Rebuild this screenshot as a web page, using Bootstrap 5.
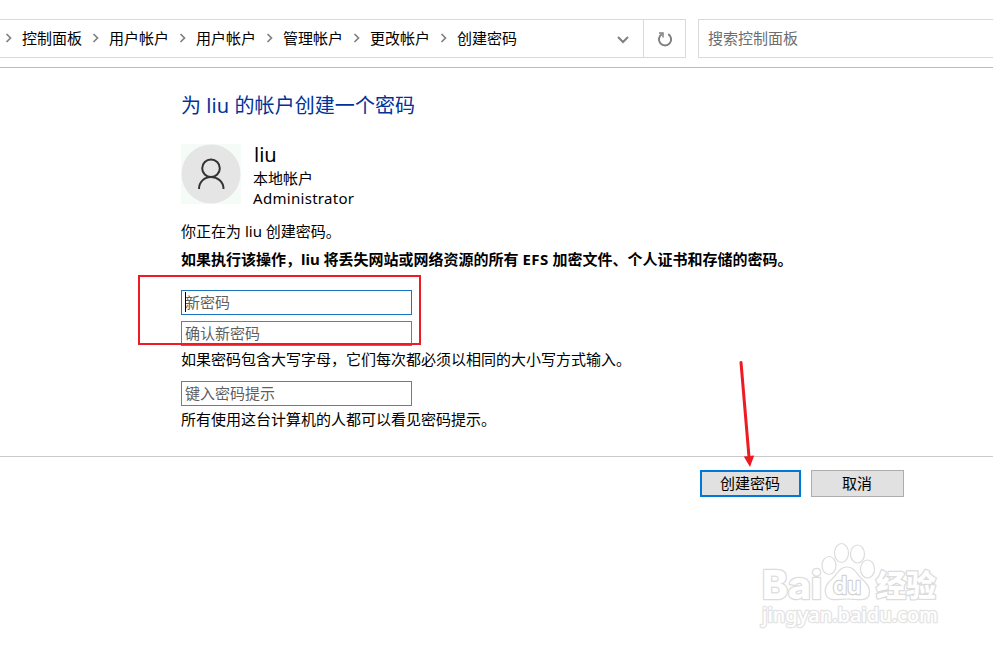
<!DOCTYPE html>
<html lang="zh-CN">
<head>
<meta charset="utf-8">
<title>创建密码</title>
<link href="https://cdn.jsdelivr.net/npm/bootstrap@5.3.0/dist/css/bootstrap.min.css" rel="stylesheet">
<style>
body{font-family:"Noto Sans","Noto Sans CJK SC",sans-serif;font-size:15px;line-height:20px;color:#000;background:#fff;height:650px;overflow:hidden}
.topbar{height:68px;padding-top:19px;border-bottom:1px solid #bdbdbd}
.address{width:686px;height:39px;border:1px solid #d9d9d9;border-left:0}
.crumb-sep{width:22px;height:20px;padding-left:5px}
.crumb-text{width:65px;line-height:18px}
.address svg,.avatar{display:block}
.drop{width:40px}
.refresh{width:42px;border-left:1px solid #d9d9d9}
.search{height:39px;margin-left:12px;border:1px solid #d9d9d9;border-right:0;padding:0 0 2px 9px;color:#6d6d6d}
.content-area{height:388px;padding:23px 0 0 181px}
.title-line{font-size:20px;line-height:30px;color:#003399;margin:0 0 23px;letter-spacing:.07px}
.who{height:60px;gap:12px}
.user-name{font-size:20px;line-height:26px;margin:-2px 0 0 1px}
.role{letter-spacing:.3px}
.note-a{margin-top:17px}
.note-b{margin-top:8px;font-weight:700;margin-bottom:21px}
.efs{letter-spacing:.4px}
.field{display:block;width:231px;height:25px;border:1px solid #7a7a7a;border-radius:0;padding:0 3px 2px;font:inherit;line-height:20px;color:#000;background:#fff}
.field::placeholder{color:#5f5f5f;opacity:1}
.field-active{border-color:#1a74bd}
.gap-fields{gap:6px}
.note-c{margin:3px 0 12px}
.note-d{margin-top:3px}
.actions{border-top:1px solid #cacaca;padding:13px 89px 0 0;gap:10px}
.btn-win{height:27px;width:93px;padding:0 1px 2px 0;border:1px solid #adadad;border-radius:0;background:#e1e1e1;color:#000;font-size:15px;line-height:20px}
.btn-main{width:101px;border:2px solid #0078d7}
.red-frame{left:138px;top:275px;width:283px;height:70px;border:2px solid #ed1c24}
.caret-line{left:185px;top:292px;width:1px;height:20px;background:#000}
.arrow-mark{left:730px;top:355px}
.watermark{left:750px;top:535px}
.watermark text{paint-order:stroke}
</style>
</head>
<body class="position-relative">
<header class="topbar d-flex">
  <div class="address d-flex align-items-center">
    <nav class="d-flex flex-grow-1">
      <div class="crumb-sep"><svg width="8" height="20"><path d="M1.500 5 5.500 9 1.500 13" fill="none" stroke="#808080" stroke-width="1.700"/></svg></div><div class="crumb-text">控制面板</div>
      <div class="crumb-sep"><svg width="8" height="20"><path d="M1.500 5 5.500 9 1.500 13" fill="none" stroke="#808080" stroke-width="1.700"/></svg></div><div class="crumb-text">用户帐户</div>
      <div class="crumb-sep"><svg width="8" height="20"><path d="M1.500 5 5.500 9 1.500 13" fill="none" stroke="#808080" stroke-width="1.700"/></svg></div><div class="crumb-text">用户帐户</div>
      <div class="crumb-sep"><svg width="8" height="20"><path d="M1.500 5 5.500 9 1.500 13" fill="none" stroke="#808080" stroke-width="1.700"/></svg></div><div class="crumb-text">管理帐户</div>
      <div class="crumb-sep"><svg width="8" height="20"><path d="M1.500 5 5.500 9 1.500 13" fill="none" stroke="#808080" stroke-width="1.700"/></svg></div><div class="crumb-text">更改帐户</div>
      <div class="crumb-sep"><svg width="8" height="20"><path d="M1.500 5 5.500 9 1.500 13" fill="none" stroke="#808080" stroke-width="1.700"/></svg></div><div class="crumb-text">创建密码</div>
    </nav>
    <div class="drop d-flex justify-content-center"><svg width="14" height="12"><path d="M2 4 7 9 12 4" fill="none" stroke="#808080" stroke-width="2"/></svg></div>
    <div class="refresh h-100 d-flex align-items-center justify-content-center"><svg width="18" height="18"><path d="M12.300 4.200A6.100 6.100 0 1 1 5.800 4.200" fill="none" stroke="#808080" stroke-width="2"/><path d="M3 3H7V7.500" fill="none" stroke="#808080" stroke-width="1.500"/></svg></div>
  </div>
  <div class="search flex-grow-1 d-flex align-items-center">搜索控制面板</div>
</header>
<main class="content-area">
  <h1 class="title-line fw-normal">为 liu 的帐户创建一个密码</h1>
  <div class="who d-flex">
    <svg class="avatar" width="60" height="60"><rect width="60" height="60" fill="#f5fbf7"/><circle cx="30" cy="30" r="29.5" fill="#e5e5e5"/><circle cx="30" cy="24.3" r="8.8" fill="none" stroke="#333" stroke-width="2"/><path d="M18 45C18 37.8 23.3 33.1 30 33.1S42.5 37.8 42.5 45" fill="none" stroke="#333" stroke-width="2"/></svg>
    <div>
      <div class="user-name">liu</div>
      <div>本地帐户</div>
      <div class="role">Administrator</div>
    </div>
  </div>
  <div class="note-a">你正在为 liu 创建密码。</div>
  <div class="note-b">如果执行该操作，liu 将丢失网站或网络资源的所有 <span class="efs">EFS</span> 加密文件、个人证书和存储的密码。</div>
  <div class="d-flex flex-column gap-fields">
    <input class="field field-active" placeholder="新密码">
    <input class="field" placeholder="确认新密码">
  </div>
  <div class="note-c">如果密码包含大写字母，它们每次都必须以相同的大小写方式输入。</div>
  <input class="field" placeholder="键入密码提示">
  <div class="note-d">所有使用这台计算机的人都可以看见密码提示。</div>
</main>
<footer class="actions d-flex justify-content-end">
  <button class="btn btn-win btn-main">创建密码</button>
  <button class="btn btn-win">取消</button>
</footer>
<div class="red-frame position-absolute"></div>
<div class="caret-line position-absolute"></div>
<svg class="arrow-mark position-absolute" width="40" height="115"><path d="M11 7.500 19 102" stroke="#ed1c24" stroke-width="3" stroke-linecap="round"/><path d="M13.800 101.500 24.200 100.500 20 112Z" fill="#ed1c24"/></svg>
<svg class="watermark position-absolute" width="200" height="100" fill="#fff" stroke="#dcdcdc" stroke-width="1.2" stroke-linejoin="round">
  <text x="12" y="64" font-family="Inter" font-weight="800" font-size="39" textLength="60" lengthAdjust="spacingAndGlyphs" stroke-width="2.500">Bai</text>
  <ellipse cx="79" cy="30.500" rx="7" ry="9"/><ellipse cx="91.500" cy="18" rx="7" ry="9.500"/><ellipse cx="107.500" cy="19" rx="7" ry="9"/><ellipse cx="117.500" cy="34" rx="7" ry="9"/>
  <path d="M97 32C89 32 87 40 82 44C76 49 74 55 76 60C79 67 88 64 97 64S117 67 119 60C121 54 118 49 112 44C107 40 105 32 97 32Z"/>
  <text x="83" y="59" font-family="Inter" font-weight="600" font-size="24" textLength="28" lengthAdjust="spacingAndGlyphs" stroke-width="2.500" stroke="#d2d2d2">du</text>
  <text x="126" y="61" font-family="Noto Sans CJK SC" font-weight="900" font-size="30" textLength="60" stroke-width="2.500">经验</text>
  <text x="12" y="87" font-family="Noto Sans" font-weight="500" font-size="19" textLength="176" lengthAdjust="spacingAndGlyphs" stroke-width="2.500" stroke="#e4e4e4">jingyan.baidu.com</text>
</svg>
<script src="https://cdn.jsdelivr.net/npm/bootstrap@5.3.0/dist/js/bootstrap.bundle.min.js"></script>
</body>
</html>
